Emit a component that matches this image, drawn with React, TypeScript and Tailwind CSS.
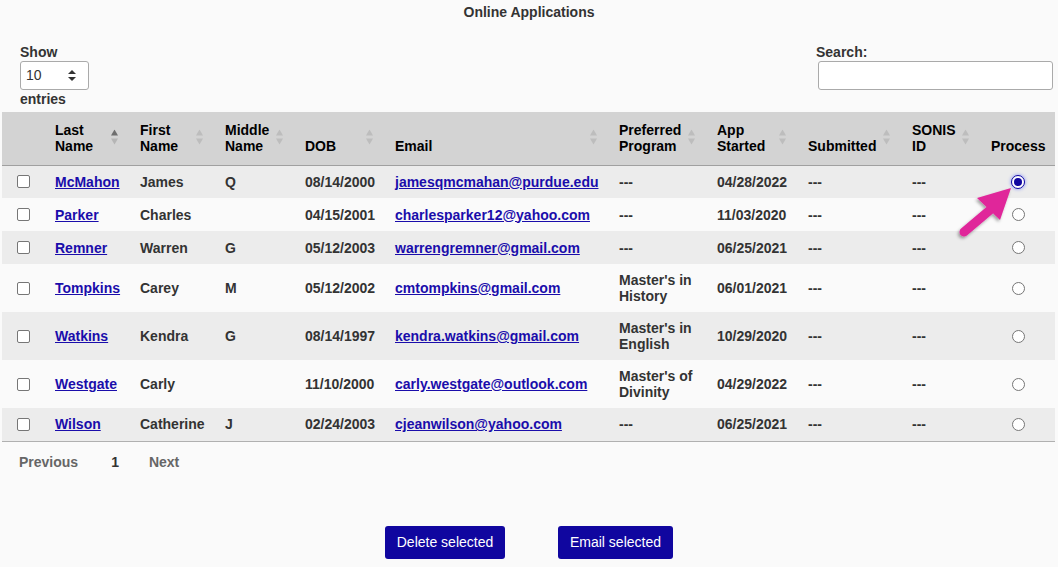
import React from "react";

type Row = {
  last: string;
  first: string;
  middle: string;
  dob: string;
  email: string;
  program: string[];
  started: string;
  tall?: boolean;
  selected?: boolean;
};

const rows: Row[] = [
  { last: "McMahon", first: "James", middle: "Q", dob: "08/14/2000", email: "jamesqmcmahan@purdue.edu", program: ["---"], started: "04/28/2022", selected: true },
  { last: "Parker", first: "Charles", middle: "", dob: "04/15/2001", email: "charlesparker12@yahoo.com", program: ["---"], started: "11/03/2020" },
  { last: "Remner", first: "Warren", middle: "G", dob: "05/12/2003", email: "warrengremner@gmail.com", program: ["---"], started: "06/25/2021" },
  { last: "Tompkins", first: "Carey", middle: "M", dob: "05/12/2002", email: "cmtompkins@gmail.com", program: ["Master's in", "History"], started: "06/01/2021", tall: true },
  { last: "Watkins", first: "Kendra", middle: "G", dob: "08/14/1997", email: "kendra.watkins@gmail.com", program: ["Master's in", "English"], started: "10/29/2020", tall: true },
  { last: "Westgate", first: "Carly", middle: "", dob: "11/10/2000", email: "carly.westgate@outlook.com", program: ["Master's of", "Divinity"], started: "04/29/2022", tall: true },
  { last: "Wilson", first: "Catherine", middle: "J", dob: "02/24/2003", email: "cjeanwilson@yahoo.com", program: ["---"], started: "06/25/2021" },
];

function SortIcon({ active }: { active?: boolean }) {
  return (
    <svg
      className="absolute right-[12px] top-1/2 -translate-y-1/2"
      width="7"
      height="17"
      viewBox="0 0 7 17"
    >
      <polygon points="3.5,0 7,6 0,6" fill={active ? "#6e6e6e" : "#bdbdbd"} />
      <polygon points="0,9 7,9 3.5,15" fill={active ? "#b5b5b5" : "#bdbdbd"} />
    </svg>
  );
}

function Th({
  children,
  sort,
  active,
}: {
  children: React.ReactNode;
  sort?: boolean;
  active?: boolean;
}) {
  return (
    <th className="relative h-[53px] pl-[10px] pb-[11px] pt-0 align-bottom text-left font-bold leading-[16px] text-black">
      {children}
      {sort && <SortIcon active={active} />}
    </th>
  );
}

function Checkbox() {
  return (
    <span className="block h-[13px] w-[13px] rounded-[2px] border border-[#767676] bg-white" />
  );
}

function Radio({ selected }: { selected?: boolean }) {
  if (selected) {
    return (
      <span className="mx-auto flex h-[14px] w-[14px] items-center justify-center rounded-full border border-[#10069f] bg-white shadow-[0_0_3px_1px_rgba(60,80,255,0.35)]">
        <span className="block h-[8px] w-[8px] rounded-full bg-[#10069f]" />
      </span>
    );
  }
  return (
    <span className="mx-auto block h-[13px] w-[13px] rounded-full border border-[#767676] bg-white" />
  );
}

export default function App() {
  return (
    <div className="relative min-h-[567px] w-full bg-[#fafafa] font-['Liberation_Sans',Arial,sans-serif] text-[14px] text-[#333]">
      <div className="h-[24px] pt-[4px] text-center font-bold leading-[16px] text-[#333]">
        Online Applications
      </div>

      <div className="flex justify-between pl-[20px] pr-[5px] pt-[20px]">
        <div className="flex flex-col items-start">
          <div className="font-bold leading-[16px]">Show</div>
          <div className="mt-[1px] flex h-[29px] w-[69px] items-center justify-between rounded-[3px] border border-[#aaa] bg-white pl-[5px] pr-[12px]">
            <span className="font-normal text-[#333]">10</span>
            <svg width="8" height="11" viewBox="0 0 8 11">
              <polygon points="4,0 8,4 0,4" fill="#333" />
              <polygon points="0,7 8,7 4,11" fill="#333" />
            </svg>
          </div>
          <div className="mt-[1px] font-bold leading-[16px]">entries</div>
        </div>
        <div className="flex flex-col items-start">
          <div className="font-bold leading-[16px]">Search:</div>
          <div className="ml-[2px] mt-[1px] h-[29px] w-[235px] rounded-[3px] border border-[#aaa] bg-white" />
        </div>
      </div>

      <table className="ml-[2px] mt-[5px] w-[1053px] table-fixed border-collapse">
        <colgroup>
          <col className="w-[43px]" />
          <col className="w-[85px]" />
          <col className="w-[85px]" />
          <col className="w-[80px]" />
          <col className="w-[90px]" />
          <col className="w-[224px]" />
          <col className="w-[98px]" />
          <col className="w-[91px]" />
          <col className="w-[104px]" />
          <col className="w-[79px]" />
          <col className="w-[74px]" />
        </colgroup>
        <thead>
          <tr className="border-b border-[#a0a0a0] bg-[#d3d3d3]">
            <th className="h-[53px]" />
            <Th sort active>
              Last
              <br />
              Name
            </Th>
            <Th sort>
              First
              <br />
              Name
            </Th>
            <Th sort>
              Middle
              <br />
              Name
            </Th>
            <Th sort>DOB</Th>
            <Th sort>Email</Th>
            <Th sort>
              Preferred
              <br />
              Program
            </Th>
            <Th sort>
              App
              <br />
              Started
            </Th>
            <Th sort>Submitted</Th>
            <Th sort>
              SONIS
              <br />
              ID
            </Th>
            <Th>Process</Th>
          </tr>
        </thead>
        <tbody className="border-b border-[#b0b0b0]">
          {rows.map((r, i) => (
            <tr
              key={r.last}
              className={`${i % 2 === 0 ? "bg-[#ececec]" : "bg-[#fafafa]"} ${
                r.tall ? "h-[48px]" : "h-[33px]"
              } font-bold leading-[16px] text-[#333]`}
            >
              <td className="pl-[15px] align-middle">
                <Checkbox />
              </td>
              <td className="pl-[10px]">
                <a className="text-[#1a0dab] underline" href="#">
                  {r.last}
                </a>
              </td>
              <td className="pl-[10px]">{r.first}</td>
              <td className="pl-[10px]">{r.middle}</td>
              <td className="pl-[10px]">{r.dob}</td>
              <td className="pl-[10px]">
                <a className="text-[#1a0dab] underline" href="#">
                  {r.email}
                </a>
              </td>
              <td className="pl-[10px]">
                {r.program.map((p, k) => (
                  <div key={k}>{p}</div>
                ))}
              </td>
              <td className="pl-[10px]">{r.started}</td>
              <td className="pl-[10px]">---</td>
              <td className="pl-[10px]">---</td>
              <td className="align-middle">
                <Radio selected={r.selected} />
              </td>
            </tr>
          ))}
        </tbody>
      </table>

      <div className="flex pt-[12px] font-bold leading-[16px]">
        <span className="ml-[19px] text-[#666]">Previous</span>
        <span className="ml-[33px] text-[#333]">1</span>
        <span className="ml-[30px] text-[#666]">Next</span>
      </div>

      <div className="mt-[56px] flex justify-center gap-[53px]">
        <button className="h-[33px] w-[120px] rounded-[3px] bg-[#10069f] text-[14px] font-normal text-white">
          Delete selected
        </button>
        <button className="h-[33px] w-[115px] rounded-[3px] bg-[#10069f] text-[14px] font-normal text-white">
          Email selected
        </button>
      </div>

      <svg
        className="pointer-events-none absolute left-[950px] top-[181px]"
        width="70"
        height="65"
        viewBox="0 0 70 65"
      >
        <defs>
          <filter id="sh" x="-30%" y="-30%" width="160%" height="160%">
            <feDropShadow dx="-1.5" dy="2" stdDeviation="1.5" floodColor="#000" floodOpacity="0.35" />
          </filter>
        </defs>
        <g filter="url(#sh)">
          <line x1="14" y1="51" x2="40" y2="29" stroke="#e0279a" strokeWidth="9" strokeLinecap="round" />
          <polygon points="61,7 27,17 50,39" fill="#e0279a" />
        </g>
      </svg>
    </div>
  );
}
